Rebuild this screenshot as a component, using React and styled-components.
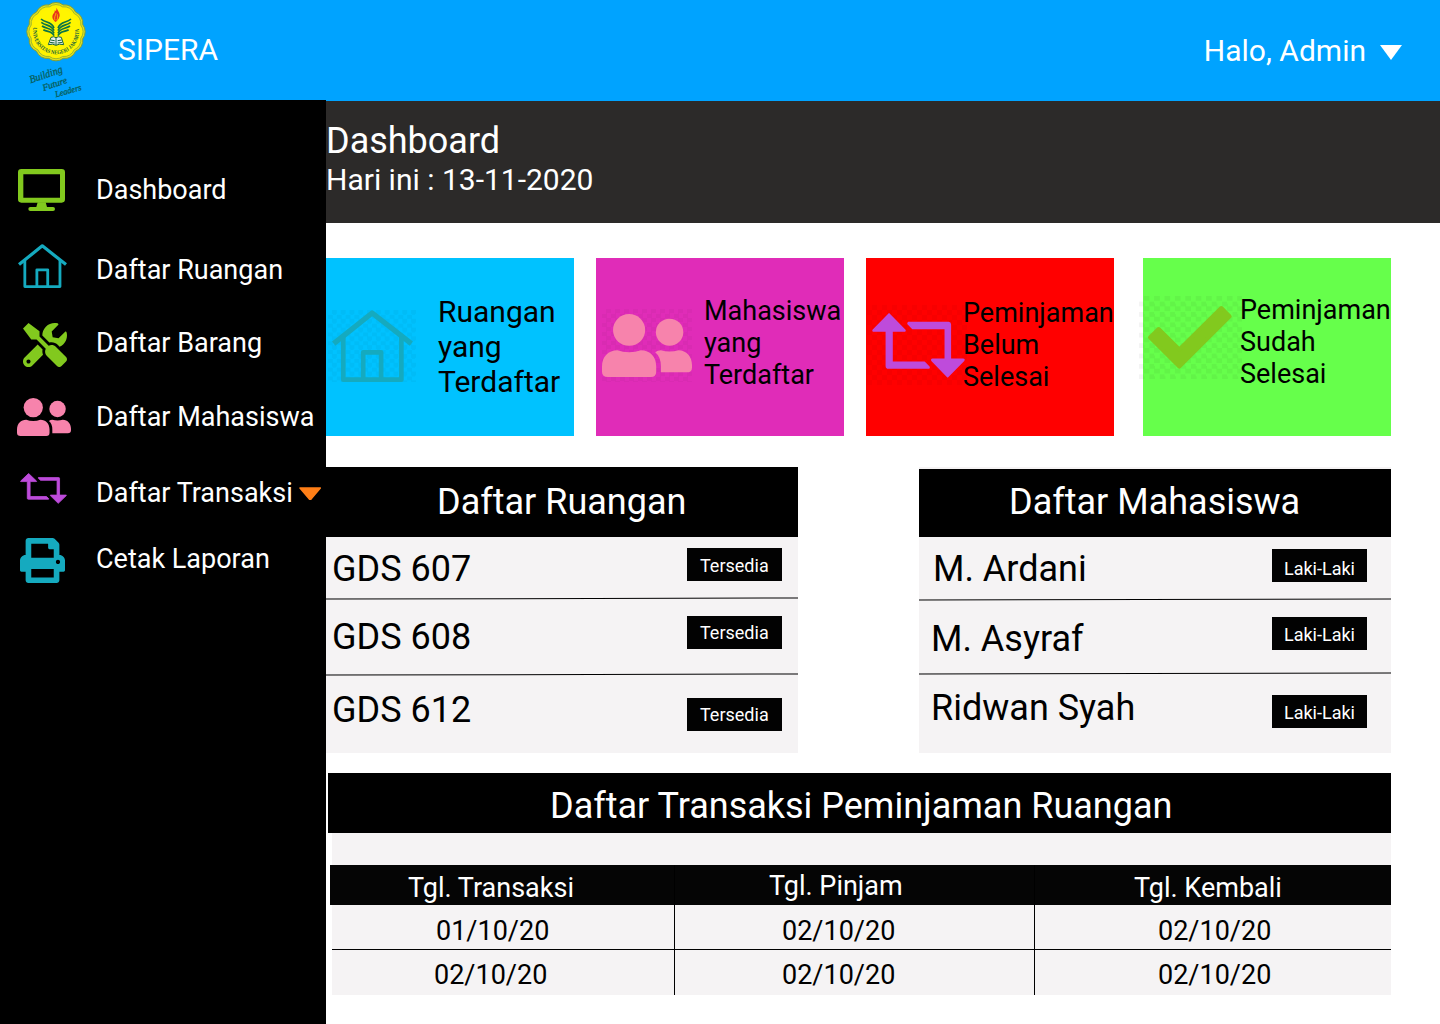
import React from "react";
import styled, { createGlobalStyle } from "styled-components";
import { FaPrint, FaTools } from "react-icons/fa";

const GlobalStyle = createGlobalStyle`
  * { box-sizing: border-box; }
  body { margin: 0; background: #fff; font-family: Roboto, "Liberation Sans", sans-serif; }
`;

const Page = styled.div`
  width: 1440px;
  height: 1024px;
  overflow: hidden;
  display: flex;
  flex-direction: column;
  background: #fff;
`;

const TopBar = styled.header`
  height: 100px;
  flex: none;
  display: flex;
  align-items: flex-start;
  background: #00a3ff;
  color: #fff;
  font-size: 30px;
  line-height: 35px;
`;

const LogoBox = styled.div`
  width: 80px;
  height: 100px;
  margin-left: 15px;
`;

const Brand = styled.div`
  margin: 32px auto 0 23px;
`;

const UserMenu = styled.div`
  display: flex;
  align-items: flex-start;
  gap: 14px;
  margin: 33px 38px 0 0;
  svg { margin-top: 12px; }
`;

const Body = styled.div`
  flex: 1;
  display: flex;
  min-height: 0;
`;

const Sidebar = styled.nav`
  width: 326px;
  flex: none;
  background: #000;
  padding-top: 74px;
  display: flex;
  flex-direction: column;
`;

const NavItem = styled.a`
  display: flex;
  height: 32px;
  margin-bottom: ${(p) => p.$gap}px;
  color: #fff;
  font-size: 27px;
  line-height: 32px;
  white-space: nowrap;
`;

const NavIcon = styled.span`
  width: 96px;
  height: 32px;
  flex: none;
  display: flex;
  align-items: center;
  padding-left: ${(p) => p.$left}px;
  margin-top: ${(p) => p.$shift}px;
  color: ${(p) => p.$color};
  svg { flex: none; }
`;

const NavCaret = styled.span`
  display: flex;
  margin: 10px 0 0 6px;
`;

const Main = styled.main`
  width: 1114px;
  flex: none;
  border-top: 1px solid #00a3ff;
`;

const PageHead = styled.section`
  height: 122px;
  padding-top: 19px;
  background: #2c2a29;
  color: #fff;
`;

const PageTitle = styled.h1`
  margin: 0;
  font-size: 36px;
  font-weight: 400;
  line-height: 42px;
`;

const PageDate = styled.p`
  margin: 0;
  font-size: 30px;
  line-height: 35px;
`;

const Cards = styled.section`
  display: flex;
  margin-top: 35px;
`;

const Card = styled.article`
  width: 248px;
  height: 178px;
  flex: none;
  display: flex;
  align-items: flex-start;
  margin-right: ${(p) => p.$gap}px;
  background: ${(p) => p.$bg};
`;

const CardArt = styled.div`
  flex: none;
  width: ${(p) => p.$w}px;
  height: ${(p) => p.$h}px;
  margin: ${(p) => p.$top}px 0 0 ${(p) => p.$left}px;
  padding: ${(p) => p.$pad};
  color: ${(p) => p.$color};
  background: repeating-conic-gradient(rgba(0, 0, 0, ${(p) => p.$tint}) 0 25%, transparent 0 50%) 0 0 /
    ${(p) => p.$cell * 2}px ${(p) => p.$cell * 2}px;
  svg { display: block; width: 100%; height: 100%; overflow: visible; }
`;

const CardLabel = styled.div`
  flex: none;
  margin: ${(p) => p.$top}px 0 0 ${(p) => p.$left}px;
  font-size: ${(p) => p.$size}px;
  line-height: ${(p) => p.$line}px;
  color: #000;
  white-space: pre-line;
`;

const Panels = styled.section`
  display: flex;
  gap: 121px;
  margin-top: 31px;
`;

const Panel = styled.section`
  width: 472px;
  height: 286px;
  flex: none;
  padding-top: ${(p) => p.$inset}px;
  background: #f5f3f4;
`;

const PanelHead = styled.h2`
  margin: 0;
  height: ${(p) => p.$h}px;
  padding: ${(p) => p.$pad};
  background: #000;
  color: #fff;
  font-size: 36px;
  font-weight: 400;
  line-height: 42px;
  white-space: nowrap;
`;

const Row = styled.div`
  display: flex;
  justify-content: space-between;
  align-items: flex-start;
  height: ${(p) => p.$h}px;
`;

const RowName = styled.span`
  margin: ${(p) => p.$top}px 0 0 ${(p) => p.$left}px;
  font-size: 36px;
  line-height: 42px;
`;

const Badge = styled.span`
  width: 95px;
  height: 33px;
  margin: ${(p) => p.$top}px ${(p) => p.$right}px 0 0;
  padding: ${(p) => p.$pad};
  background: #020202;
  color: #fff;
  font-size: 18px;
  line-height: 21px;
  white-space: nowrap;
`;

const Rule = styled.div`
  height: 1px;
  background: #000;
  transform: rotate(-0.14deg);
`;

const Transactions = styled.section`
  margin: 20px 0 0 2px;
  width: 1063px;
`;

const TableBody = styled.div`
  margin-left: 4px;
  padding-top: 32px;
  background: #f5f3f4;
`;

const TableRow = styled.div`
  display: grid;
  grid-template-columns: 343px 360px 356px;
  height: ${(p) => p.$h}px;
  border-bottom: ${(p) => (p.$line ? "1px solid #000" : "0")};
  font-size: 27px;
  line-height: 32px;
`;

const TableHead = styled(TableRow)`
  grid-template-columns: 345px 360px 356px;
  margin-left: -2px;
  background: #050505;
  color: #fff;
`;

const Cell = styled.div`
  padding: ${(p) => p.$top}px 0 0 ${(p) => p.$left}px;
  border-right: ${(p) => (p.$last ? "0" : "1px solid #000")};
  white-space: nowrap;
`;

function scallop(cx, cy, r, lobes) {
  const pts = Array.from({ length: lobes }, (_, i) => {
    const a = ((i + 0.5) / lobes) * Math.PI * 2 - Math.PI / 2;
    return [cx + r * Math.cos(a), cy + r * Math.sin(a)];
  });
  const arc = r * 0.42;
  return (
    `M${pts[0].join(" ")}` +
    pts
      .slice(1)
      .concat([pts[0]])
      .map((p) => `A${arc} ${arc} 0 0 1 ${p.join(" ")}`)
      .join("") +
    "Z"
  );
}

const Logo = () => (
  <svg width="80" height="100" viewBox="0 0 240 300">
    <path d={scallop(123, 95, 83, 12)} fill="#e0e01f" stroke="#7f9f3a" strokeWidth="3" />
    <path d={scallop(123, 95, 77, 12)} fill="#fff200" stroke="#8fae30" strokeWidth="2.5" />
    <circle cx="123" cy="95" r="71" fill="#fff500" />
    <path id="seal" d="M55 82A69 69 0 1 0 191 82" fill="none" />
    <text fontFamily="Liberation Serif, serif" fontWeight="700" fontSize="17" fill="#17633a">
      <textPath href="#seal" textLength="236" lengthAdjust="spacingAndGlyphs">UNIVERSITAS NEGERI JAKARTA</textPath>
    </text>
    <path
      d="M124 23C130 34 137 41 133 51C131 59 126 63 121 66C114 59 110 54 113 45C116 40 120 38 119 31C123 35 125 31 124 23Z"
      fill="#e8361b"
    />
    <path d="M120 61C116 52 122 46 123 39M125 61C130 54 127 48 127 43" stroke="#ffe600" strokeWidth="2" fill="none" />
    <g fill="none" stroke="#0c7446" strokeWidth="5">
      <path d="M78 57C92 70 109 63 117 84" />
      <path d="M79 67C94 79 109 73 117 92" />
      <path d="M81 78C95 88 110 82 117 100" />
      <path d="M85 89C98 97 110 91 117 107" />
      <path d="M168 57C154 70 137 63 129 84" />
      <path d="M167 67C152 79 137 73 129 92" />
      <path d="M165 78C151 88 136 82 129 100" />
      <path d="M161 89C148 97 136 91 129 107" />
    </g>
    <path d="M108 112Q117 108 123 113Q130 108 139 112L146 134Q132 130 123 136Q114 130 100 134Z" fill="#e8f1ed" stroke="#17633a" strokeWidth="3" />
    <path d="M123 113V135M107 120L119 122M105 127L119 129M128 122L140 120M128 129L142 127" stroke="#17633a" strokeWidth="3" />
    <g fontFamily="Liberation Serif, serif" fontStyle="italic" fill="#08605c" stroke="#08605c" strokeWidth="0.9">
      <text transform="translate(47 250) rotate(-19)" fontSize="32" textLength="103" lengthAdjust="spacingAndGlyphs">Building</text>
      <text transform="translate(86 273) rotate(-19)" fontSize="28" textLength="76" lengthAdjust="spacingAndGlyphs">Future</text>
      <text transform="translate(123 292) rotate(-16)" fontSize="26" textLength="81" lengthAdjust="spacingAndGlyphs">Leaders</text>
    </g>
  </svg>
);

const Monitor = () => (
  <svg width="47" height="42" viewBox="54 57 141 126" fill="currentColor">
    <path
      fillRule="evenodd"
      d="M64 57H185Q195 57 195 67V148Q195 158 185 158H64Q54 158 54 148V67Q54 57 64 57ZM70 73V143H180V73Z"
    />
    <path d="M113 157H137L141 171H159Q165 171 165 177T159 183H91Q85 183 85 177T91 171H109Z" />
  </svg>
);

const House = ({ w, h }) => (
  <svg width={w} height={h} viewBox="36 180 244 216" preserveAspectRatio="none" fill="none" stroke="currentColor">
    <path d="M41 281L157 189L275 281" strokeWidth="16" strokeLinejoin="round" />
    <path d="M70 260V389H245V260M130 389V307H184V389" strokeWidth="14" strokeLinejoin="round" />
  </svg>
);

const People = ({ w, h }) => (
  <svg width={w} height={h} viewBox="36 191 269 190" preserveAspectRatio="none" fill="currentColor">
    <circle cx="117" cy="239" r="48" />
    <circle cx="238" cy="246" r="41" />
    <path d="M36 349C36 319 55 300 82 300Q98 306 117 306T152 300C180 300 198 319 198 349V365Q198 381 182 381H54Q36 381 36 365Z" />
    <path d="M195 306Q202 300 212 300Q224 304 238 304T264 300C289 300 305 320 305 345V352Q305 367 289 367H212V348Q212 320 195 306Z" />
  </svg>
);

const Swap = ({ w, h }) => (
  <svg
    width={w}
    height={h}
    viewBox="34 188 284 195"
    preserveAspectRatio="none"
    fill="currentColor"
    stroke="currentColor"
    strokeWidth="5"
    strokeLinejoin="round"
  >
    <path d="M86 191L134 239Q136 242 132 242H95V336H194L208 350Q209 353 206 353H84Q78 353 78 347V242H40Q36 242 38 239Z" />
    <path d="M145 217H268Q273 217 273 222V327H312Q316 327 314 330L265 379L217 330Q216 327 219 327H258V234H158L144 220Z" />
  </svg>
);

const Check = () => (
  <svg viewBox="56 168 252 189" preserveAspectRatio="none">
    <path
      d="M62 262L88 237L150 298L276 174L301 199L150 350Z"
      fill="currentColor"
      stroke="currentColor"
      strokeWidth="12"
      strokeLinejoin="round"
    />
  </svg>
);

const Caret = ({ w, h, color }) => (
  <svg width={w} height={h} viewBox="0 0 22 15" preserveAspectRatio="none">
    <path d="M0 0H22L11 15Z" fill={color} />
  </svg>
);

const OrangeCaret = () => (
  <svg width="22" height="13" viewBox="0 0 22 13">
    <path d="M1 1H21.3L12.2 11.8Q11.2 12.6 10.2 11.8Z" fill="#ff7f17" stroke="#ff7f17" strokeWidth="1.6" strokeLinejoin="round" />
  </svg>
);

const navItems = [
  { label: "Dashboard", icon: <Monitor />, color: "#82c91e", left: 18, shift: 0, gap: 48 },
  { label: "Daftar Ruangan", icon: <House w={49} h={44} />, color: "#15aabf", left: 18, shift: -4, gap: 41 },
  { label: "Daftar Barang", icon: <FaTools size={44} />, color: "#82c91e", left: 23, shift: 2, gap: 42 },
  { label: "Daftar Mahasiswa", icon: <People w={54} h={38} />, color: "#f783ac", left: 17, shift: 0, gap: 44 },
  { label: "Daftar Transaksi", icon: <Swap w={47} h={31} />, color: "#be4bdb", left: 20, shift: -5, gap: 34, caret: true },
  { label: "Cetak Laporan", icon: <FaPrint size={45} />, color: "#15aabf", left: 20, shift: 1, gap: 0 },
];

const cards = [
  {
    bg: "#00c2ff", gap: 22, label: "Ruangan\nyang\nTerdaftar",
    text: { $top: 36, $left: 22, $size: 30, $line: 35 },
    art: { $w: 88, $h: 72, $left: 2, $top: 52, $pad: "0 3px 0 4px", $cell: 4.4, $tint: 0.03, $color: "#15aabf" },
    icon: <House />,
  },
  {
    bg: "#e02cb8", gap: 22, label: "Mahasiswa\nyang\nTerdaftar",
    text: { $top: 37, $left: 12, $size: 27, $line: 32 },
    art: { $w: 90, $h: 73, $left: 6, $top: 51, $pad: "5px 0", $cell: 4.5, $tint: 0.03, $color: "#f783ac" },
    icon: <People />,
  },
  {
    bg: "#ff0000", gap: 29, label: "Peminjaman\nBelum\nSelesai",
    text: { $top: 39, $left: -4, $size: 27, $line: 32 },
    art: { $w: 100, $h: 80, $left: 1, $top: 47, $pad: "8px 2px 7px 5px", $cell: 5, $tint: 0.03, $color: "#be4bdb" },
    icon: <Swap />,
  },
  {
    bg: "#66ff4b", gap: 0, label: "Peminjaman\nSudah\nSelesai",
    text: { $top: 36, $left: -2, $size: 27, $line: 32 },
    art: { $w: 103, $h: 83, $left: -4, $top: 38, $pad: "10px 10px 10px 9px", $cell: 5.2, $tint: 0.045, $color: "#82c91e" },
    icon: <Check />,
  },
];

const rooms = [
  { name: "GDS 607", h: 61, top: 11, left: 6, badge: 11, pad: "7px 0 0 13px" },
  { name: "GDS 608", h: 75, top: 17, left: 6, badge: 17, pad: "6px 0 0 13px" },
  { name: "GDS 612", h: 78, top: 14, left: 6, badge: 23, pad: "6px 0 0 13px" },
];

const students = [
  { name: "M. Ardani", h: 62, top: 11, left: 14, badge: 12, pad: "9px 0 0 12px" },
  { name: "M. Asyraf", h: 73, top: 18, left: 12, badge: 17, pad: "7px 0 0 12px" },
  { name: "Ridwan Syah", h: 79, top: 13, left: 12, badge: 21, pad: "7px 0 0 12px" },
];

const List = ({ rows, status, right }) =>
  rows.map((r, i) => (
    <React.Fragment key={r.name}>
      {i > 0 && <Rule />}
      <Row $h={r.h}>
        <RowName $top={r.top} $left={r.left}>{r.name}</RowName>
        <Badge $top={r.badge} $right={right} $pad={r.pad}>{status}</Badge>
      </Row>
    </React.Fragment>
  ));

export default function App() {
  return (
    <Page>
      <GlobalStyle />
      <TopBar>
        <LogoBox><Logo /></LogoBox>
        <Brand>SIPERA</Brand>
        <UserMenu>
          Halo, Admin
          <Caret w={22} h={15} color="#fff" />
        </UserMenu>
      </TopBar>
      <Body>
        <Sidebar>
          {navItems.map((n) => (
            <NavItem key={n.label} $gap={n.gap}>
              <NavIcon $left={n.left} $shift={n.shift} $color={n.color}>{n.icon}</NavIcon>
              {n.label}
              {n.caret && <NavCaret><OrangeCaret /></NavCaret>}
            </NavItem>
          ))}
        </Sidebar>
        <Main>
          <PageHead>
            <PageTitle>Dashboard</PageTitle>
            <PageDate>Hari ini : 13-11-2020</PageDate>
          </PageHead>
          <Cards>
            {cards.map((c) => (
              <Card key={c.label} $bg={c.bg} $gap={c.gap}>
                <CardArt {...c.art}>{c.icon}</CardArt>
                <CardLabel {...c.text}>{c.label}</CardLabel>
              </Card>
            ))}
          </Cards>
          <Panels>
            <Panel $inset={0}>
              <PanelHead $h={70} $pad="14px 0 0 111px">Daftar Ruangan</PanelHead>
              <List rows={rooms} status="Tersedia" right={16} />
            </Panel>
            <Panel $inset={2}>
              <PanelHead $h={68} $pad="12px 0 0 90px">Daftar Mahasiswa</PanelHead>
              <List rows={students} status="Laki-Laki" right={24} />
            </Panel>
          </Panels>
          <Transactions>
            <PanelHead $h={60} $pad="12px 0 0 222px">Daftar Transaksi Peminjaman Ruangan</PanelHead>
            <TableBody>
              <TableHead $h={40}>
                <Cell $top={7} $left={78}>Tgl. Transaksi</Cell>
                <Cell $top={5} $left={94}>Tgl. Pinjam</Cell>
                <Cell $top={7} $left={99} $last>Tgl. Kembali</Cell>
              </TableHead>
              <TableRow $h={45} $line>
                <Cell $top={10} $left={104}>01/10/20</Cell>
                <Cell $top={10} $left={107}>02/10/20</Cell>
                <Cell $top={10} $left={123} $last>02/10/20</Cell>
              </TableRow>
              <TableRow $h={45}>
                <Cell $top={9} $left={102}>02/10/20</Cell>
                <Cell $top={9} $left={107}>02/10/20</Cell>
                <Cell $top={9} $left={123} $last>02/10/20</Cell>
              </TableRow>
            </TableBody>
          </Transactions>
        </Main>
      </Body>
    </Page>
  );
}
